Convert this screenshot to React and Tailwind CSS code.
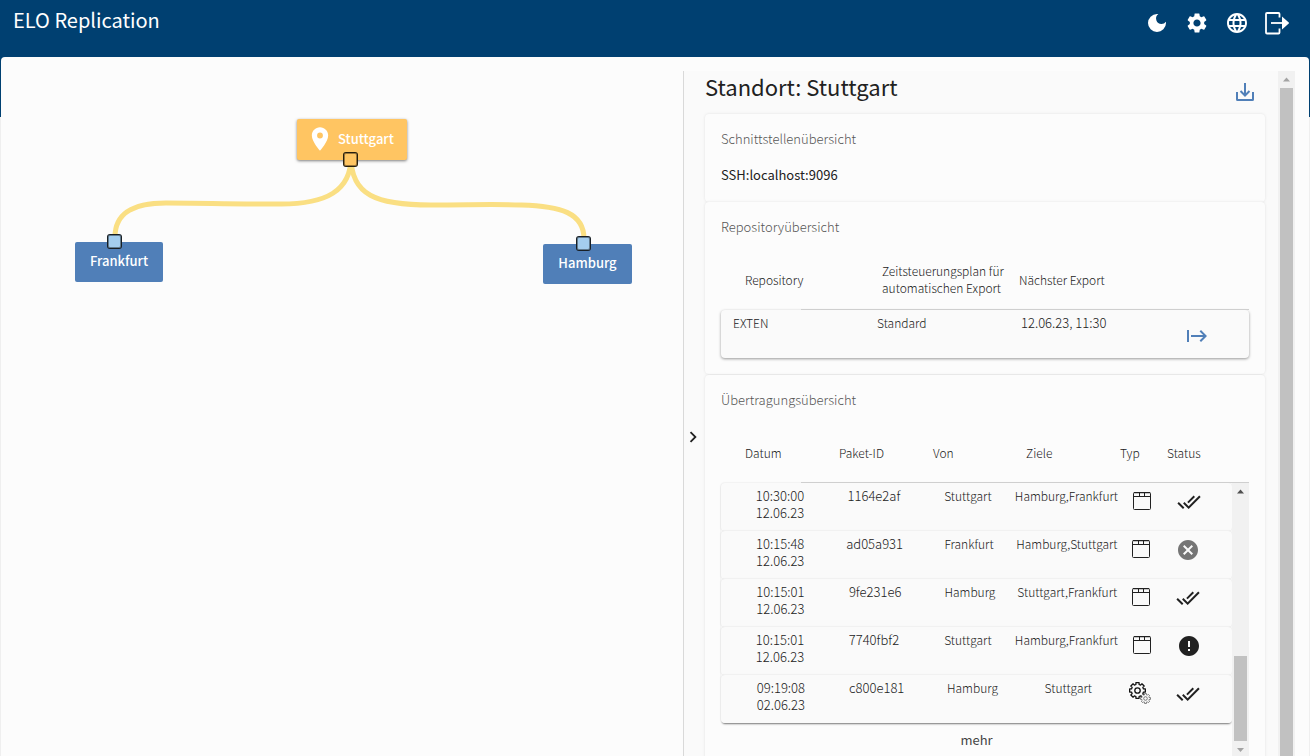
import { useState } from 'react';
import clsx from 'clsx';
import {
  MdDarkMode,
  MdSettings,
  MdLanguage,
  MdPlace,
  MdChevronRight,
  MdStart,
  MdDoneAll,
  MdCancel,
  MdError,
} from 'react-icons/md';

const REPOSITORIES = [{ name: 'EXTEN', schedule: 'Standard', nextExport: '12.06.23, 11:30' }];

const TRANSFERS = [
  { time: '10:30:00', date: '12.06.23', id: '1164e2af', from: 'Stuttgart', to: 'Hamburg,Frankfurt', type: 'package', status: 'done' },
  { time: '10:15:48', date: '12.06.23', id: 'ad05a931', from: 'Frankfurt', to: 'Hamburg,Stuttgart', type: 'package', status: 'cancelled' },
  { time: '10:15:01', date: '12.06.23', id: '9fe231e6', from: 'Hamburg', to: 'Stuttgart,Frankfurt', type: 'package', status: 'done' },
  { time: '10:15:01', date: '12.06.23', id: '7740fbf2', from: 'Stuttgart', to: 'Hamburg,Frankfurt', type: 'package', status: 'error' },
  { time: '09:19:08', date: '02.06.23', id: 'c800e181', from: 'Hamburg', to: 'Stuttgart', type: 'config', status: 'done' },
];

const LogoutIcon = () => (
  <svg width="24" height="24" viewBox="0 0 24 24" fill="none" stroke="currentColor" strokeWidth="1.8">
    <path d="M14.500 6.500V3a1 1 0 0 0-1-1H2a1 1 0 0 0-1 1v18.500a1 1 0 0 0 1 1h11.500a1 1 0 0 0 1-1V17.500" />
    <path d="M6 12h12" />
    <path d="M17 5.500l7.200 6.500-7.200 6.500z" fill="currentColor" stroke="none" />
  </svg>
);

const DownloadIcon = () => (
  <svg width="20" height="20" viewBox="0 0 20 20" fill="none" stroke="currentColor" strokeWidth="2">
    <path d="M2 10v7.500a.5.500 0 0 0 .5.500h15a.5.500 0 0 0 .5-.5V10" />
    <path d="M10 1v12M5.500 9l4.500 4.500L14.500 9" />
  </svg>
);

const PackageIcon = () => (
  <svg width="18" height="18" viewBox="0 0 18 18" fill="none" stroke="#212121">
    <rect x=".5" y=".5" width="17" height="17" rx="1" />
    <path d="M.5 4.500h17M6.500 .5v4M11.500 .5v4" />
    <path d="M1 .5h16" strokeWidth="1.500" />
  </svg>
);

// outline of an eight-toothed cog around (cx, cy)
const cogPath = (cx, cy, outer, inner) => {
  const points = [];
  for (let i = 0; i < 8; i++) {
    const mid = (i * Math.PI) / 4;
    [[-0.26, inner], [-0.2, outer], [0.2, outer], [0.26, inner]].forEach(([d, r]) => {
      points.push(`${(cx + r * Math.cos(mid + d)).toFixed(2)} ${(cy + r * Math.sin(mid + d)).toFixed(2)}`);
    });
  }
  return `M${points.join('L')}Z`;
};

const ConfigIcon = () => (
  <svg width="24" height="24" viewBox="0 0 24 24" fill="none">
    <g stroke="#111" strokeWidth="1.300" strokeLinejoin="round">
      <path d={cogPath(9.5, 9.5, 8, 6.2)} />
      <circle cx="9.500" cy="9.500" r="2.700" />
    </g>
    <g stroke="#777" strokeWidth="1" strokeLinejoin="round">
      <path d={cogPath(17.5, 17.5, 5, 3.8)} fill="#fafafa" />
      <circle cx="17.500" cy="17.500" r="1.800" />
    </g>
  </svg>
);

const StatusIcon = ({ status }) => {
  if (status === 'cancelled') return <MdCancel size={24} className="text-[#757575]" aria-label="Abgebrochen" />;
  if (status === 'error') return <MdError size={24} className="text-[#212121]" aria-label="Fehler" />;
  return <MdDoneAll size={24} className="text-[#212121]" aria-label="Fertig" />;
};

const Arrow = ({ down, dark }) => (
  <svg width="17" height="17" viewBox="0 0 17 17" className={clsx('shrink-0', dark ? 'text-[#505050]' : 'text-[#a3a3a3]')}>
    <path d={down ? 'M5 7h7L8.500 11z' : 'M5 10.500h7L8.500 6.500z'} fill="currentColor" />
  </svg>
);

const HeaderButton = ({ label, children }) => (
  <button type="button" aria-label={label} className="flex size-6 items-center justify-center">
    {children}
  </button>
);

const Port = ({ className }) => (
  <span
    className={clsx(
      'absolute size-[15px] rounded-[3px] border border-black/85 inset-ring inset-ring-black/40',
      className
    )}
  />
);

const SiteGraph = () => (
  <section className="relative overflow-hidden" aria-label="Standorte">
    <svg width="682" height="300" className="absolute left-0 top-0" fill="none" stroke="#fadf83" strokeWidth="5">
      <path d="M350 100C350 134 325 147 280 147C235 147 195 146 165 146C135 146 114 154 114 180" />
      <path d="M350 100C350 138 375 148 430 148C470 148 490 147 520 148C560 149 583 156 583 182" />
    </svg>
    <button
      type="button"
      className="absolute left-[296px] top-[62px] flex h-[41px] w-[110px] items-center gap-1 rounded-[2px] bg-[#ffc562] pb-0.5 pl-[9px] text-[13px] font-medium text-white shadow-[0_1px_3px_rgba(0,0,0,0.5)]"
    >
      <MdPlace size={28} className="shrink-0" />
      Stuttgart
    </button>
    <button
      type="button"
      className="absolute left-[74px] top-[185px] h-10 w-[88px] rounded-[2px] bg-[#507fb8] pb-0.5 text-[13px] font-medium text-white"
    >
      Frankfurt
    </button>
    <button
      type="button"
      className="absolute left-[542px] top-[187px] h-10 w-[89px] rounded-[2px] bg-[#507fb8] pb-0.5 text-[13px] font-medium text-white"
    >
      Hamburg
    </button>
    <Port className="left-[342px] top-[95px] bg-[#ffc562]" />
    <Port className="left-[106px] top-[177px] bg-[#a4cdee]" />
    <Port className="left-[575px] top-[179px] bg-[#a4cdee]" />
  </section>
);

const Card = ({ title, className, children }) => (
  <section
    className={clsx(
      'rounded-[4px] bg-[#fcfcfc] px-4 pt-[15px] shadow-[0_0_3px_rgba(0,0,0,0.1)]',
      className
    )}
  >
    <h2 className="text-[13px] leading-5 font-light text-[#555]">{title}</h2>
    {children}
  </section>
);

// the rule under a table head starts past the first column's label
const HEAD_ROW =
  "relative grid h-[58px] items-center pb-1 pl-6 text-left after:absolute after:right-0 after:bottom-0 after:left-20 after:h-px after:bg-[#cfcfcf] after:content-['']";

const RepositoryTable = () => (
  <table className="mt-[15px] block text-[12px] leading-[17px] font-light text-[#212121]">
    <thead className="block">
      <tr className={clsx(HEAD_ROW, 'grid-cols-[137fr_137fr_137fr_93fr]')}>
        <th className="font-light">Repository</th>
        <th className="font-light">Zeitsteuerungsplan für automatischen Export</th>
        <th className="font-light">Nächster Export</th>
        <th aria-label="Aktion" />
      </tr>
    </thead>
    <tbody className="block">
      {REPOSITORIES.map((repo) => (
        <tr
          key={repo.name}
          className="grid h-12 grid-cols-[2fr_2fr_2fr_1fr] rounded-[4px] bg-[#fafafa] px-3 pt-1 shadow-[0_1px_3px_rgba(0,0,0,0.4)]"
        >
          <td>{repo.name}</td>
          <td>{repo.schedule}</td>
          <td className="text-[13px]">{repo.nextExport}</td>
          <td className="self-center pl-5 text-[#507fb8]">
            <button type="button" aria-label="Jetzt exportieren" className="block">
              <MdStart size={24} />
            </button>
          </td>
        </tr>
      ))}
    </tbody>
  </table>
);

const TransferTable = () => (
  <table className="mt-[15px] block text-[12px] leading-[17px] font-light text-[#212121]">
    <thead className="block">
      <tr className={clsx(HEAD_ROW, 'grid-cols-[94fr_94fr_93fr_94fr_47fr_82fr]')}>
        {['Datum', 'Paket-ID', 'Von', 'Ziele', 'Typ', 'Status'].map((label) => (
          <th key={label} className="font-light">
            {label}
          </th>
        ))}
      </tr>
    </thead>
    <tbody className="block">
      <tr className="flex h-[275px]">
        <td className="block flex-1">
          <TransferRows />
        </td>
        <td className="block">
          <div className="flex h-full w-[17px] flex-col bg-[#f1f1f1]">
            <Arrow dark />
            <div className="mx-[2px] mt-auto h-[85px] bg-[#c1c1c1]" />
            <Arrow down />
          </div>
        </td>
      </tr>
    </tbody>
  </table>
);

const TransferRows = () => (
  <>
    <table className="block">
      <tbody className="block rounded-b-[4px] shadow-[0_2px_2px_-1px_rgba(0,0,0,0.5)]">
        {TRANSFERS.map((t) => (
          <tr
            key={t.id}
            className="grid h-12 grid-cols-[2fr_2fr_2fr_2fr_1fr_1fr] rounded-[4px] bg-[#fafafa] pt-1 pr-5 pl-3 text-center shadow-[0_0_2px_rgba(0,0,0,0.14)]"
          >
            <td className="text-[13px]">
              {t.time}
              <br />
              {t.date}
            </td>
            <td className="text-[13px]">{t.id}</td>
            <td>{t.from}</td>
            <td className="whitespace-nowrap">{t.to}</td>
            <td className="flex h-7 items-center justify-center">
              {t.type === 'config' ? <ConfigIcon /> : <PackageIcon />}
            </td>
            <td className="flex h-[30px] items-center justify-center">
              <StatusIcon status={t.status} />
            </td>
          </tr>
        ))}
      </tbody>
    </table>
    <button type="button" className="block h-8 w-full text-[13px] font-normal text-[#444]">
      mehr
    </button>
  </>
);

export default function App() {
  const [panelOpen, setPanelOpen] = useState(true);

  return (
    <div className="flex h-screen flex-col overflow-hidden bg-[linear-gradient(#004071_117px,#efefef_117px)] font-['Noto_Sans_CJK_SC','Noto_Sans',sans-serif] text-[#212121]">
      <header className="flex h-[57px] shrink-0 items-start justify-between pr-[21px] pl-[13px] text-white">
        <h1 className="text-[20px] leading-10">ELO Replication</h1>
        <nav className="flex h-[46px] items-center gap-4">
          <HeaderButton label="Dunkles Design">
            <MdDarkMode size={24} />
          </HeaderButton>
          <HeaderButton label="Einstellungen">
            <MdSettings size={24} />
          </HeaderButton>
          <HeaderButton label="Sprache">
            <MdLanguage size={24} />
          </HeaderButton>
          <HeaderButton label="Abmelden">
            <LogoutIcon />
          </HeaderButton>
        </nav>
      </header>

      <main className="mx-px grid min-h-0 flex-1 grid-cols-[682fr_612fr] rounded-t-[4px] bg-[#fcfcfc] pr-3.5">
        <SiteGraph />

        <aside className="mt-3.5 flex min-h-0 overflow-hidden border-l border-[#d9d9d9] bg-[#fafafa]">
          <button
            type="button"
            aria-label="Detailbereich umschalten"
            aria-expanded={panelOpen}
            onClick={() => setPanelOpen((o) => !o)}
            className="mr-[3px] flex w-[18px] shrink-0 items-center justify-center pt-[46px]"
          >
            <MdChevronRight size={22} className="shrink-0" stroke="currentColor" />
          </button>

          {panelOpen && (
            <div className="min-w-0 flex-1 pr-[13px]">
              <div className="flex h-[43px] items-start justify-between pr-2.5">
                <h1 className="text-[22px] leading-[30px]">Standort: Stuttgart</h1>
                <button type="button" aria-label="Herunterladen" className="mt-[11px] text-[#507fb8]">
                  <DownloadIcon />
                </button>
              </div>

              <Card title="Schnittstellenübersicht" className="h-[88px]">
                <p className="mt-4 text-[13px] leading-5">SSH:localhost:9096</p>
              </Card>
              <Card title="Repositoryübersicht" className="pb-4">
                <RepositoryTable />
              </Card>
              <Card title="Übertragungsübersicht" className="mt-px pb-4">
                <TransferTable />
              </Card>
            </div>
          )}

          <div className="flex w-[17px] shrink-0 flex-col bg-[#f1f1f1]">
            <Arrow />
            <div className="mx-[2px] flex-1 bg-[#c1c1c1]" />
          </div>
        </aside>
      </main>
    </div>
  );
}
